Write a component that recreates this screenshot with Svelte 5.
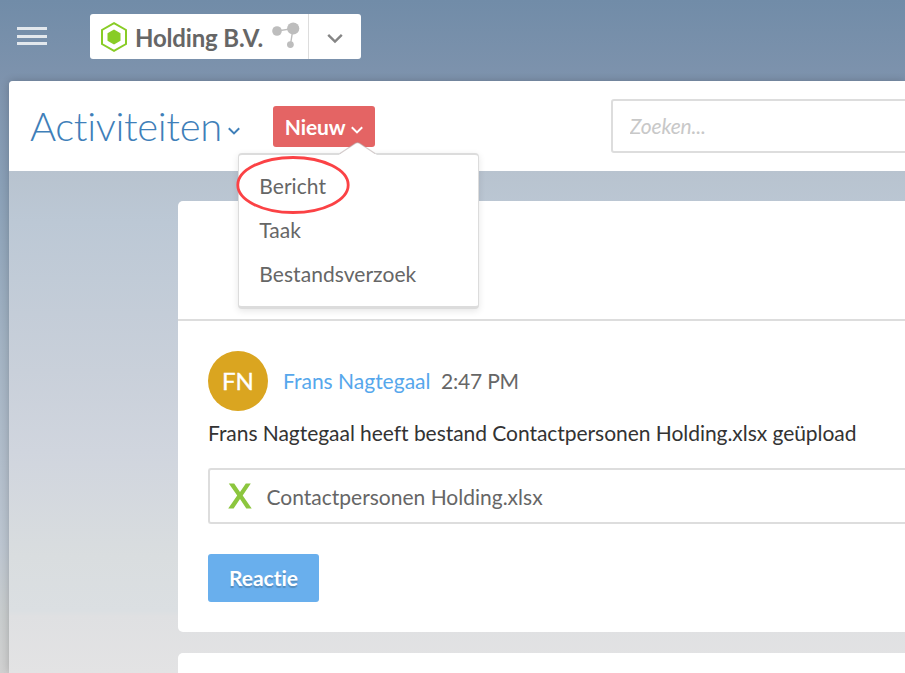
<script>
  const menuItems = ['Bericht', 'Taak', 'Bestandsverzoek'];
</script>

<div class="page">
  <header class="topbar">
    <button class="burger" aria-label="Menu"><i></i><i></i><i></i></button>
    <div class="company">
      <div class="company-name">
        <svg class="hex" width="28" height="32" viewBox="0 0 28 32">
          <path d="M14 2.2 26 9v14L14 29.8 2 23V9Z" fill="none" stroke="#88cc26" stroke-width="2" />
          <path d="M14 8.5 20.5 12.2v7.6L14 23.5l-6.5-3.7v-7.6Z" fill="#88cc26" />
        </svg>
        <span class="company-text">Holding B.V.</span>
        <svg class="nodes" width="28" height="28" viewBox="0 0 28 28" fill="#bdbdbd">
          <path d="M5 9 21 6.5 18.5 22.5" fill="none" stroke="#bdbdbd" stroke-width="1.4" />
          <circle cx="5" cy="9" r="4.8" /><circle cx="21.2" cy="6.5" r="6.1" /><circle cx="18.4" cy="22.6" r="3.4" />
        </svg>
      </div>
      <button class="company-toggle" aria-label="Kies bedrijf">
        <svg width="16" height="11" viewBox="0 0 16 11"><path d="M1.2 1.8 8 8.6l6.8-6.8" fill="none" stroke="#858585" stroke-width="2.4" /></svg>
      </button>
    </div>
  </header>

  <main class="panel">
    <div class="toolbar">
      <h1>Activiteiten</h1>
      <svg class="title-arrow" width="12" height="8" viewBox="0 0 12 8"><path d="M.8 1.3 6 6.4l5.2-5.1" fill="none" stroke="#3f7fb9" stroke-width="2" /></svg>
      <div class="new">
        <button class="new-button">
          <span>Nieuw</span>
          <svg width="12" height="8" viewBox="0 0 12 8"><path d="M.8 1.3 6 6.4l5.2-5.1" fill="none" stroke="#fff" stroke-width="2" /></svg>
        </button>
        <div class="menu">
          <svg class="notch" width="38" height="14" viewBox="0 0 38 14">
            <path d="M0 14 2 12 16.5 2.3Q18.5 1 20.5 2.3L35 12l3 2Z" fill="#fff" />
            <path d="M1 12.5 16.5 2.3Q18.5 1 20.5 2.3L36 12.5" fill="none" stroke="#b5a5a5" stroke-opacity=".55" stroke-width="1.3" />
          </svg>
          {#each menuItems as item}
            <div class="menu-item">{item}</div>
          {/each}
          <svg class="highlight" width="114" height="58" viewBox="0 0 114 58">
            <ellipse cx="57" cy="29" rx="55.2" ry="27.5" fill="none" stroke="#fb4245" stroke-width="2.8" />
          </svg>
        </div>
      </div>
      <input class="search" placeholder="Zoeken..." aria-label="Zoeken" />
    </div>

    <section class="feed">
      <article class="card">
        <div class="card-head"></div>
        <div class="card-body">
          <div class="author">
            <div class="avatar">FN</div>
            <span class="name">Frans Nagtegaal</span>
            <time>2:47 PM</time>
          </div>
          <p>Frans Nagtegaal heeft bestand Contactpersonen Holding.xlsx geüpload</p>
          <div class="file">
            <svg width="24" height="26" viewBox="0 0 24 26"><path d="M.8.5h5.4L12 9.1 17.8.5h5L14.7 12.4 23.7 25.5h-5.4L12 16.1 5.6 25.5H.2L9.2 12.4Z" fill="#8cc63e" /></svg>
            <span>Contactpersonen Holding.xlsx</span>
          </div>
          <button class="reply">Reactie</button>
        </div>
      </article>
      <article class="card next"></article>
    </section>
  </main>
</div>

<style>
  :global(body) { margin: 0; overflow: hidden; }
  .page, .page * { box-sizing: border-box; }
  .page {
    height: 673px;
    display: flex;
    flex-direction: column;
    overflow: hidden;
    font-family: Lato, "Liberation Sans", sans-serif;
    font-size: 21px;
    font-variant-ligatures: none;
    color: #666;
    background: linear-gradient(#718ca8 0, #7e93ad 81px, #8aa0b7 190px, #a3b3c3 350px, #bcc5d0 545px, #c8cccd 615px, #d0d0d0 673px);
  }
  button { border: 0; margin: 0; padding: 0; font: inherit; font-variant-ligatures: none; background: none; }
  svg { display: block; flex: none; }
  .topbar { height: 81px; flex: none; display: flex; align-items: flex-start; padding: 14px 0 0 17px; }
  .burger { width: 30px; height: 18px; margin-top: 13px; display: flex; flex-direction: column; justify-content: space-between; }
  .burger i { width: 30px; height: 3px; background: #e3e8ed; }
  .company { display: flex; width: 271px; height: 45px; margin-left: 43px; background: #fff; border-radius: 3px; }
  .company-name { width: 218px; padding-left: 10px; display: flex; align-items: center; }
  .hex { margin-top: 1px; }
  .company-text { margin-left: 7px; width: 130px; font-size: 24px; font-weight: 700; letter-spacing: -.17px; white-space: nowrap; line-height: 45px; padding-top: 1px; }
  .nodes { margin: 0 0 1px 7px; }
  .company-toggle { flex: 1; border-left: 1px solid #ddd; display: flex; align-items: center; justify-content: center; padding-top: 3px; }

  .panel {
    flex: 1;
    min-height: 0;
    margin-left: 9px;
    border-top-left-radius: 4px;
    box-shadow: 0 0 9px rgba(0, 0, 0, .2);
    background: linear-gradient(#b8c3cf 90px, #bcc8d5 140px, #c9d0da 290px, #d0d5de 370px, #d9dddf 475px, #dbdfe2 530px, #dfe0e2 535px, #e3e3e4 592px);
  }
  .toolbar { height: 90px; background: #fff; border-top-left-radius: 4px; display: flex; padding-left: 21px; }
  h1 { margin: 0; width: 192px; font-size: 40px; line-height: 48px; padding-top: 21px; font-weight: 300; letter-spacing: -.35px; color: #3f7fb9; white-space: nowrap; }
  .title-arrow { margin: 46px 0 0 6px; }
  .new { position: relative; margin: 25px 0 0 33px; width: 102px; height: 41px; }
  .new-button { width: 102px; height: 41px; background: #e46464; border-radius: 3px; color: #fff; font-weight: 700; display: flex; align-items: center; padding-left: 12px; }
  .new-button span { width: 61px; line-height: 41px; padding-bottom: 1px; text-align: left; letter-spacing: -.1px; }
  .new-button svg { margin: 6px 0 0 5px; }
  .menu {
    position: absolute;
    z-index: 2;
    top: 47px;
    left: -35px;
    width: 241px;
    height: 156px;
    padding: 9px 0 0 20px;
    background: #fff;
    border: 2px solid #dcdcdc;
    border-width: 2px 1px 3px;
    border-radius: 4px;
    box-shadow: 0 2px 7px rgba(0, 0, 0, .1);
  }
  .notch { position: absolute; left: 100px; top: -14px; }
  .menu-item { height: 44px; line-height: 44px; padding-left: .5px; letter-spacing: .05px; }
  .highlight { position: absolute; left: -3px; top: 1px; }
  .search {
    width: 330px;
    height: 54px;
    margin: 18px 0 0 236px;
    flex: none;
    border: 2px solid #ddd;
    border-radius: 3px;
    padding: 0 16px 2px 17px;
    background: #fff;
    font: italic 21px Lato, sans-serif;
    letter-spacing: -.15px;
  }
  .search::placeholder { color: #c8c8c8; opacity: 1; }

  .feed { padding: 30px 0 0 169px; }
  .card { height: 431px; background: #fff; border-radius: 5px 0 0 5px; }
  .card.next { margin-top: 21px; }
  .card-head { height: 120px; border-bottom: 2px solid #ddd; }
  .card-body { padding: 30px 0 0 30px; display: flex; flex-direction: column; align-items: flex-start; }
  .author { display: flex; align-items: center; height: 60px; line-height: 60px; }
  .avatar { width: 60px; height: 60px; border-radius: 50%; background: #daa520; color: #fff; font-size: 24px; -webkit-text-stroke: .4px #fff; text-align: center; padding-top: 0; }
  .name { width: 148px; margin-left: 15px; color: #56a7ec; white-space: nowrap; }
  time { margin-left: 10px; letter-spacing: -.2px; }
  p { margin: 7px 0 0; line-height: 30px; color: #333; white-space: nowrap; letter-spacing: -.045px; }
  .file { align-self: stretch; height: 56px; margin-top: 20px; border: 2px solid #ddd; border-right: 0; border-radius: 3px 0 0 3px; display: flex; align-items: center; padding-left: 18px; }
  .file span { margin-left: 14.5px; padding-top: 0; }
  .reply { width: 111px; height: 48px; margin-top: 30px; padding-bottom: 2px; background: #69afed; border-radius: 3px; color: #fff; font-weight: 700; text-shadow: 0 2px 1px rgba(0, 0, 0, .2); }
</style>
